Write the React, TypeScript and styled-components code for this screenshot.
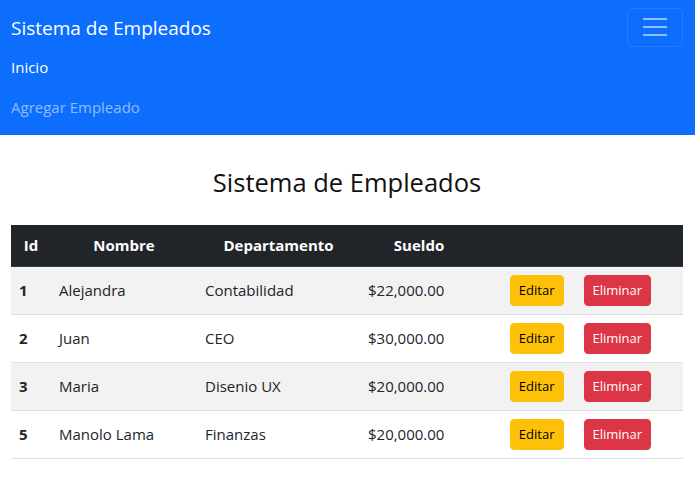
import React from 'react'
import styled, {createGlobalStyle} from 'styled-components'

const GlobalStyle = createGlobalStyle`
  * {
    box-sizing: border-box;
  }

  body {
    margin: 0;
    font-family: "Open Sans", "Noto Sans", sans-serif;
    font-size: 15px;
    line-height: 1.5;
    color: #212529;
    background: #fff;
  }
`

const Navbar = styled.nav`
  background: #0d6efd;
  padding: 8px 12px 8px 11px;
  display: flex;
  flex-direction: column;
`

const NavTop = styled.div`
  display: flex;
  justify-content: space-between;
  align-items: center;
  height: 39px;
`

const Brand = styled.span`
  color: #fff;
  font-size: 19px;
  line-height: 30px;
`

const Toggler = styled.button`
  width: 56px;
  height: 39px;
  margin-top: -1px;
  background: transparent;
  border: 1px solid rgba(255, 255, 255, 0.1);
  border-radius: 6px;
  display: flex;
  align-items: center;
  justify-content: center;
  padding: 0;
`

const NavLinks = styled.ul`
  list-style: none;
  margin: 0;
  padding: 0;
`

const NavLink = styled.li<{active?: boolean}>`
  padding: 8px 0;
  line-height: 24px;
  font-size: 15px;
  color: ${props => props.active ? '#fff' : 'rgba(255, 255, 255, 0.55)'};
`

const Main = styled.main`
  padding: 0 12px 0 11px;
`

const Title = styled.h2`
  margin: 0;
  padding: 31px 0 26px;
  text-align: center;
  font-size: 25.5px;
  font-weight: 500;
  line-height: 33px;
  color: #111;
`

const Table = styled.table`
  width: 100%;
  border-collapse: collapse;
  table-layout: fixed;
`

const HeadCell = styled.th<{w: number}>`
  width: ${props => props.w}px;
  background: #212529;
  color: #fff;
  font-weight: 700;
  text-align: center;
  height: 41px;
  padding: 0 8px;
  border-bottom: 1px solid #373b3e;
`

const Row = styled.tr<{striped: boolean}>`
  background: ${props => props.striped ? '#f2f2f2' : '#fff'};
  border-bottom: 1px solid #dee2e6;
`

const Cell = styled.td<{bold?: boolean}>`
  height: 48px;
  padding: 0 8px;
  font-weight: ${props => props.bold ? 700 : 400};
  white-space: nowrap;
`

const Actions = styled.div`
  display: flex;
  justify-content: center;
  gap: 20px;
`

const Button = styled.button<{variant: 'warning' | 'danger'}>`
  height: 31px;
  padding: 0 8px;
  font-family: inherit;
  font-size: 13px;
  border-radius: 4px;
  border: 1px solid ${props => props.variant === 'warning' ? '#ffc107' : '#dc3545'};
  background: ${props => props.variant === 'warning' ? '#ffc107' : '#dc3545'};
  color: ${props => props.variant === 'warning' ? '#000' : '#fff'};
`

const empleados = [
    {id: 1, nombre: 'Alejandra', departamento: 'Contabilidad', sueldo: '$22,000.00'},
    {id: 2, nombre: 'Juan', departamento: 'CEO', sueldo: '$30,000.00'},
    {id: 3, nombre: 'Maria', departamento: 'Disenio UX', sueldo: '$20,000.00'},
    {id: 5, nombre: 'Manolo Lama', departamento: 'Finanzas', sueldo: '$20,000.00'},
]

const App: React.FC = () => {
    return (
        <>
            <GlobalStyle/>
            <Navbar>
                <NavTop>
                    <Brand>Sistema de Empleados</Brand>
                    <Toggler>
                        <svg width="24" height="20" viewBox="0 0 24 20">
                            <path d="M0 2h24M0 10h24M0 18h24" stroke="rgba(255,255,255,0.55)"
                                  strokeWidth="2"/>
                        </svg>
                    </Toggler>
                </NavTop>
                <NavLinks>
                    <NavLink active>Inicio</NavLink>
                    <NavLink>Agregar Empleado</NavLink>
                </NavLinks>
            </Navbar>
            <Main>
                <Title>Sistema de Empleados</Title>
                <Table>
                    <thead>
                    <tr>
                        <HeadCell w={40}>Id</HeadCell>
                        <HeadCell w={146}>Nombre</HeadCell>
                        <HeadCell w={163}>Departamento</HeadCell>
                        <HeadCell w={118}>Sueldo</HeadCell>
                        <HeadCell w={205}></HeadCell>
                    </tr>
                    </thead>
                    <tbody>
                    {empleados.map((e, i) => (
                        <Row key={e.id} striped={i % 2 === 0}>
                            <Cell bold>{e.id}</Cell>
                            <Cell>{e.nombre}</Cell>
                            <Cell>{e.departamento}</Cell>
                            <Cell>{e.sueldo}</Cell>
                            <Cell>
                                <Actions>
                                    <Button variant="warning">Editar</Button>
                                    <Button variant="danger">Eliminar</Button>
                                </Actions>
                            </Cell>
                        </Row>
                    ))}
                    </tbody>
                </Table>
            </Main>
        </>
    )
}

export default App
